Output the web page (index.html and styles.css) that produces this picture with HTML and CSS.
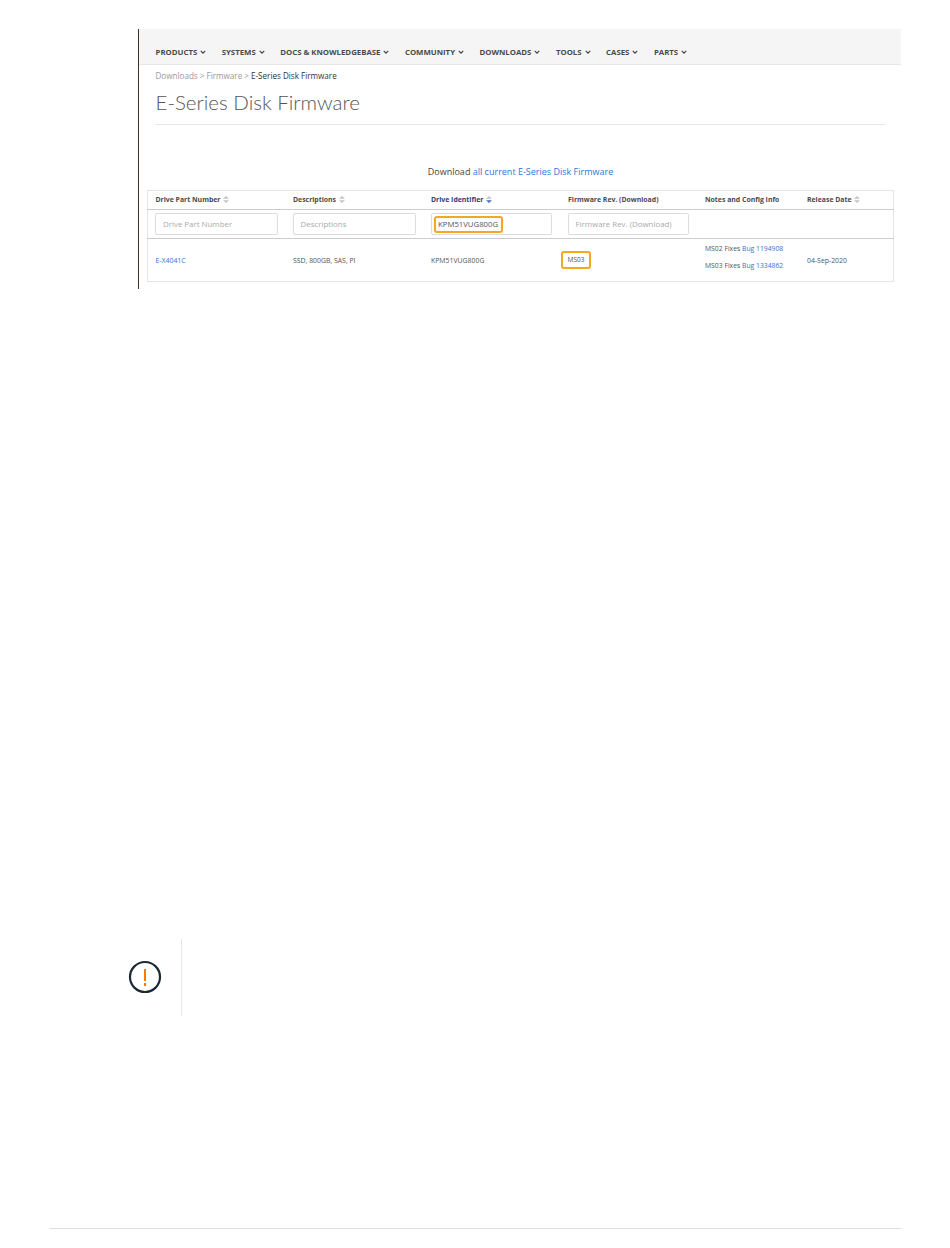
FILE: index.html
```html
<!DOCTYPE html>
<html>
<head>
    <title>E-Series Disk Firmware</title>
    <link rel="stylesheet" href="styles.css">
</head>
<body>
    <div class="captura">
        <div class="menu">
            <span class="menuItem">PRODUCTS <svg class="flecha" viewBox="0 0 8 5"><path d="M1 1l3 3 3-3"/></svg></span>
            <span class="menuItem">SYSTEMS <svg class="flecha" viewBox="0 0 8 5"><path d="M1 1l3 3 3-3"/></svg></span>
            <span class="menuItem">DOCS &amp; KNOWLEDGEBASE <svg class="flecha" viewBox="0 0 8 5"><path d="M1 1l3 3 3-3"/></svg></span>
            <span class="menuItem">COMMUNITY <svg class="flecha" viewBox="0 0 8 5"><path d="M1 1l3 3 3-3"/></svg></span>
            <span class="menuItem">DOWNLOADS <svg class="flecha" viewBox="0 0 8 5"><path d="M1 1l3 3 3-3"/></svg></span>
            <span class="menuItem">TOOLS <svg class="flecha" viewBox="0 0 8 5"><path d="M1 1l3 3 3-3"/></svg></span>
            <span class="menuItem">CASES <svg class="flecha" viewBox="0 0 8 5"><path d="M1 1l3 3 3-3"/></svg></span>
            <span class="menuItem">PARTS <svg class="flecha" viewBox="0 0 8 5"><path d="M1 1l3 3 3-3"/></svg></span>
        </div>
        <div class="migas"><span class="gris">Downloads &gt; Firmware &gt;</span> E-Series Disk Firmware</div>
        <h1>E-Series Disk Firmware</h1>
        <p class="descarga">Download <a href="#">all current E-Series Disk Firmware</a></p>
        <table>
            <colgroup>
                <col class="c1"><col class="c2"><col class="c3"><col class="c4"><col class="c5"><col class="c6">
            </colgroup>
            <thead>
                <tr class="titulos">
                    <th>Drive Part Number <svg class="orden" viewBox="0 0 7 8"><path d="M3.5 0L7 3H0zM3.5 8L0 5h7z"/></svg></th>
                    <th>Descriptions <svg class="orden" viewBox="0 0 7 8"><path d="M3.5 0L7 3H0zM3.5 8L0 5h7z"/></svg></th>
                    <th class="activo">Drive Identifier <svg class="orden" viewBox="0 0 7 8"><path class="apagado" d="M3.5 0L7 3H0z"/><path d="M3.5 8L0 5h7z"/></svg></th>
                    <th>Firmware Rev. (Download)</th>
                    <th>Notes and Config Info</th>
                    <th>Release Date <svg class="orden" viewBox="0 0 7 8"><path d="M3.5 0L7 3H0zM3.5 8L0 5h7z"/></svg></th>
                </tr>
                <tr class="filtros">
                    <td><div class="filtro f1">Drive Part Number</div></td>
                    <td><div class="filtro f1">Descriptions</div></td>
                    <td><div class="filtro f2"><span class="marcaInput">KPM51VUG800G</span></div></td>
                    <td><div class="filtro f2">Firmware Rev. (Download)</div></td>
                    <td></td>
                    <td></td>
                </tr>
            </thead>
            <tbody>
                <tr class="fila">
                    <td><a href="#">E-X4041C</a></td>
                    <td>SSD, 800GB, SAS, PI</td>
                    <td>KPM51VUG800G</td>
                    <td><span class="marcaCelda">MS03</span></td>
                    <td class="notas">
                        <div>MS02 Fixes <a href="#">Bug 1194908</a></div>
                        <div>MS03 Fixes <a href="#">Bug 1334862</a></div>
                    </td>
                    <td>04-Sep-2020</td>
                </tr>
            </tbody>
        </table>
    </div>

    <div class="aviso">
        <div class="avisoIcono">
            <svg width="34" height="34" viewBox="0 0 34 34">
                <circle cx="17" cy="17" r="15" fill="none" stroke="#1b2a35" stroke-width="2.2"/>
                <path d="M17 9v12" stroke="#f57c00" stroke-width="2" fill="none"/>
                <path d="M17 23v3" stroke="#f57c00" stroke-width="2" fill="none"/>
            </svg>
        </div>
    </div>

    <div class="pie"></div>
</body>
</html>
```

FILE: styles.css
```css
* {
    box-sizing: border-box;
}

body {
    margin: 0;
    padding: 29px 0 0;
    background: white;
    font-family: "Open Sans", "Noto Sans", sans-serif;
    color: #444;
}

a {
    color: #3274d9;
    text-decoration: none;
}

.captura {
    margin-left: 138px;
    width: 763px;
    height: 260px;
    border-left: 1px solid #3a3128;
}

.menu {
    display: flex;
    align-items: center;
    gap: 15.5px;
    height: 36px;
    padding: 10px 0 0 16.5px;
    background-color: #f5f5f5;
    border-bottom: 1px solid #e6e6e6;
}

.menuItem {
    display: flex;
    align-items: center;
    gap: 3px;
    font-size: 7.8px;
    font-weight: 700;
    color: #4a4a4a;
    white-space: nowrap;
}

.flecha {
    width: 6px;
    height: 4px;
    fill: none;
    stroke: #444;
    stroke-width: 1.6;
}

.migas {
    margin: 5px 0 0 16.5px;
    font-size: 8.1px;
    line-height: 12px;
    color: #333;
}

.gris {
    color: #999;
}

h1 {
    margin: 8px 0 0 16.5px;
    width: 730px;
    height: 35px;
    border-bottom: 1px solid #e6e6e6;
    font-family: Lato, sans-serif;
    font-size: 20.5px;
    font-weight: 300;
    line-height: 24px;
    color: #555;
}

.descarga {
    margin: 40px 0 0 8px;
    width: 747px;
    font-size: 9px;
    line-height: 14px;
    text-align: center;
    color: #444;
}

table {
    margin: 11px 0 0 8px;
    width: 747px;
    table-layout: fixed;
    border-collapse: collapse;
    border: 1px solid #e4e4e4;
    font-size: 6.9px;
}

.c1, .c2 {
    width: 138px;
}

.c3, .c4 {
    width: 137px;
}

.c5 {
    width: 102px;
}

th,
td {
    padding: 0 0 0 7.5px;
    text-align: left;
    white-space: nowrap;
}

.titulos {
    height: 19px;
    border-bottom: 1px solid #ccc;
}

.titulos th {
    padding-bottom: 2px;
    font-size: 6.9px;
    font-weight: 700;
    color: #4a4a4a;
}

.titulos .activo {
    color: #2c3e7a;
}

.orden {
    width: 6px;
    height: 7px;
    margin-left: 1px;
    vertical-align: -1px;
    fill: #c4c4c4;
}

.activo .orden {
    fill: #3a6fc4;
}

.orden .apagado {
    fill: #c4c4c4;
}

.filtros {
    height: 29px;
    border-bottom: 1px solid #ccc;
}

.filtros td {
    padding-left: 7px;
}

.filtro {
    display: flex;
    align-items: center;
    height: 22px;
    padding-left: 7px;
    border: 1px solid #ddd;
    border-radius: 2px;
    font-size: 7.9px;
    color: #aaa;
}

.f1 {
    width: 123px;
}

.f2 {
    width: 121px;
}

.marcaInput {
    margin-left: -5px;
    padding: 2px 2.5px;
    border: 2px solid #f5a623;
    border-radius: 3px;
    font-size: 7.75px;
    line-height: 9px;
    color: #555;
}

.fila {
    height: 43px;
    color: #555;
}

.marcaCelda {
    display: inline-block;
    margin-left: -7px;
    padding: 3px 4.5px;
    border: 2px solid #f5a623;
    border-radius: 3px;
    font-size: 6.6px;
    line-height: 8px;
}

.notas {
    padding-bottom: 6px;
    font-size: 6.8px;
}

.notas div + div {
    margin-top: 8px;
}

.aviso {
    margin: 650px 0 0 125px;
    width: 57px;
    height: 77px;
    border-right: 1px solid #e6e6e6;
}

.avisoIcono {
    display: flex;
    height: 100%;
    padding: 21px 0 0 3px;
}

.pie {
    margin: 212px 0 0 50px;
    width: 851px;
    border-top: 1px solid #ddd;
}
```
